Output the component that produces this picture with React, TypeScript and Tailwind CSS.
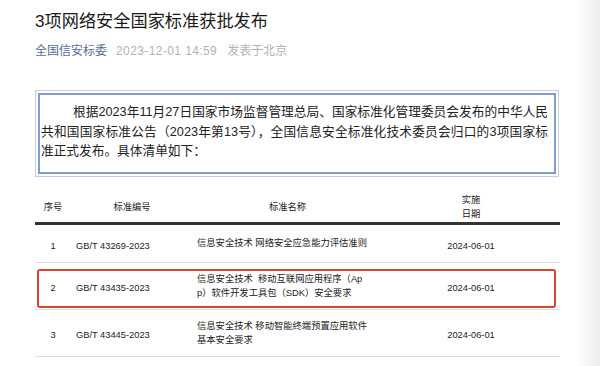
const font = { fontFamily: '"Liberation Sans", "Noto Sans CJK SC", sans-serif' }

const rows = [
  { no: '1', code: 'GB/T 43269-2023', name: ['信息安全技术 网络安全应急能力评估准则'], date: '2024-06-01', mark: false },
  { no: '2', code: 'GB/T 43435-2023', name: ['信息安全技术  移动互联网应用程序（Ap', 'p）软件开发工具包（SDK）安全要求'], date: '2024-06-01', mark: true },
  { no: '3', code: 'GB/T 43445-2023', name: ['信息安全技术 移动智能终端预置应用软件', '基本安全要求'], date: '2024-06-01', mark: false },
]

export default function App() {
  return (
    <div className="flex h-[366px] w-[600px] overflow-hidden bg-white" style={font}>
      <main className="flex-1 pl-[35px] pt-[9px]">
        <h1 className="text-[17.2px] leading-[24px] text-[#1a1a1a]">3项网络安全国家标准获批发布</h1>

        <div className="mt-[9px] flex items-center text-[12px] leading-[18px]">
          <span className="text-[#576b95]">全国信安标委</span>
          <span className="ml-[9px] tracking-[0.4px] text-[#b2b2b2]">2023-12-01 14:59</span>
          <span className="ml-[10px] text-[#b2b2b2]">发表于北京</span>
        </div>

        <div className="mt-[30px] w-[524px] border border-[#c9ccd2] p-[2px]">
          <div className="border-2 border-[#7f9bd3] pb-[10px] pl-[1px] pr-[6px] pt-[8px] text-[12.7px] leading-[19.5px] text-[#222]">
            <div className="pl-[32px] [text-align-last:justify]">根据2023年11月27日国家市场监督管理总局、国家标准化管理委员会发布的中华人民</div>
            <div className="[text-align-last:justify]">共和国国家标准公告（2023年第13号），全国信息安全标准化技术委员会归口的3项国家标</div>
            <div>准正式发布。具体清单如下：</div>
          </div>
        </div>

        <div className="mt-[10px] w-[525px] text-[9.3px] leading-[14.5px] text-[#222]">
          <div className="flex h-[38px] items-end border-b-[3px] border-[#333]">
            <div className="mb-[7px] w-[36px] text-center">序号</div>
            <div className="mb-[7px] w-[122px] text-center">标准编号</div>
            <div className="mb-[7px] w-[189px] text-center">标准名称</div>
            <div className="flex-1 text-center">
              <div>实施</div>
              <div>日期</div>
            </div>
          </div>

          {rows.map((r) => (
            <div key={r.no} className="relative flex items-center border-b border-[#dedede] py-[9px] leading-[14px]">
              <div className="w-[36px] pt-[5px] text-center">{r.no}</div>
              <div className="w-[122px] pl-[5px] pt-[5px]">{r.code}</div>
              <div className="w-[189px] whitespace-pre pl-[4px]">
                {r.name.map((l) => (
                  <div key={l}>{l}</div>
                ))}
              </div>
              <div className="flex-1 pt-[5px] text-center">{r.date}</div>
              {r.mark && (
                <div className="absolute bottom-[1px] left-[2px] right-[4px] top-[6px] rounded-[3px] border-2 border-[#d9452f]" />
              )}
            </div>
          ))}
        </div>
      </main>
      <div className="w-[24px] bg-gradient-to-r from-white to-[#ececec]" />
    </div>
  )
}
